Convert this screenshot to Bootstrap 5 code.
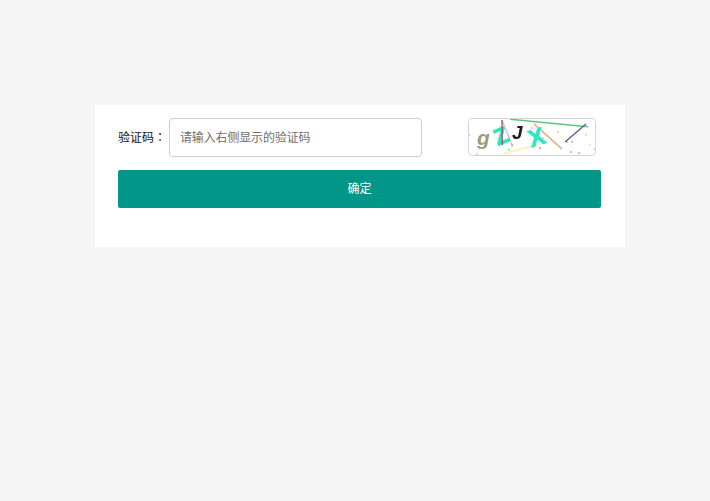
<!DOCTYPE html>
<html lang="zh">
<head>
<meta charset="utf-8">
<title>验证码</title>
<link href="https://cdn.jsdelivr.net/npm/bootstrap@5.3.0/dist/css/bootstrap.min.css" rel="stylesheet">
<style>
html,body{height:100%}
body{background:#f5f5f5;font-family:"Liberation Sans","Noto Sans CJK SC",sans-serif;font-size:12px;color:#222}
.verify-panel{width:530px;height:142px;margin:105px 0 0 95px;background:#fff;padding:13px 24px 0 23px}
.verify-label{width:51px;font-family:"Noto Sans CJK SC",sans-serif;font-size:12px;line-height:1;white-space:nowrap;color:#111;padding-bottom:1px}
.label-colon{font-family:"Noto Sans CJK TC",sans-serif}
.verify-input{width:253px;height:39px;font-size:12px;letter-spacing:-.15px;padding:0 10px;border:1px solid #ccc;border-radius:4px;color:#333;box-shadow:none}
.verify-input::placeholder{color:#6f6f6f;opacity:1}
.captcha-box{width:128px;height:38px;margin-left:46px;border:1px solid #d4d4d4;border-radius:4px;overflow:hidden;display:block;background:#fff}
.verify-submit{height:38px;background:#009688;border:0;border-radius:2px;font-size:12px;color:#fff;margin-top:13px}
.verify-submit:hover{background:#009688;color:#fff}
</style>
</head>
<body>
<form class="verify-panel">
  <div class="d-flex align-items-start">
    <label for="code" class="verify-label align-self-center">验证码<span class="label-colon" lang="zh-TW">：</span></label>
    <input id="code" type="text" class="form-control verify-input flex-shrink-0" placeholder="请输入右侧显示的验证码">
    <svg class="captcha-box flex-shrink-0" viewBox="1 1 126 36" role="img" aria-label="验证码图片">
      <defs><filter id="soft" x="-5%" y="-5%" width="110%" height="110%"><feGaussianBlur stdDeviation=".35"/></filter></defs>
      <g filter="url(#soft)">
      <g>
        <circle cx="1" cy="17" r=".9" fill="#b9b0c0"/><circle cx="41" cy="32" r="1" fill="#8fd8b0"/><circle cx="44" cy="27" r="1.1" fill="#d080a0"/>
        <circle cx="64" cy="10" r=".9" fill="#e0b0d0"/><circle cx="72" cy="30" r="1" fill="#b090d0"/><circle cx="90" cy="14" r="1" fill="#e8d090"/>
        <circle cx="99" cy="24" r="1" fill="#d8b090"/><circle cx="103" cy="34" r="1" fill="#b0a0d0"/><circle cx="104" cy="24" r=".9" fill="#e0a080"/>
        <circle cx="111" cy="35" r="1" fill="#e090b0"/><circle cx="118" cy="17" r=".9" fill="#a0e0d0"/><circle cx="122" cy="27" r=".9" fill="#e8e0a0"/>
        <circle cx="126" cy="31" r=".9" fill="#e8d090"/><circle cx="9" cy="36" r=".9" fill="#a0e0d0"/><circle cx="75" cy="20" r=".9" fill="#e8c0d0"/>
      </g>
      <path d="M35 36 79 24" stroke="#f6f0b8" stroke-width="1.6" fill="none"/>
      <path d="M42 1.3 120 8.7" stroke="#5cc87a" stroke-width="1.5" fill="none"/>
      <path d="M97 24 118 6" stroke="#5c5f8e" stroke-width="1.4" fill="none"/>
      <path d="M66 6 94 31" stroke="#e4b98c" stroke-width="1.7" fill="none"/>
      <path d="M34 2 44 27" stroke="#e8b4cf" stroke-width="1.3" fill="none"/>
      <text x="9" y="27" font-family="Liberation Sans" font-size="21" font-style="italic" font-weight="700" fill="#a09a78">g</text>
      <text x="26" y="25" font-family="Liberation Sans" font-size="23" font-weight="700" fill="#2fe6b4" stroke="#2fe6b4" stroke-width=".7" transform="rotate(-24 35 17)">Z</text>
      <text x="44" y="21" font-family="Liberation Sans" font-size="19" font-style="italic" font-weight="700" fill="#1c1c1c">J</text>
      <text x="61" y="27" font-family="Liberation Sans" font-size="24" font-weight="700" fill="#2fe6c4" stroke="#2fe6c4" stroke-width=".7" transform="rotate(-18 70 20)">X</text>
      <path d="M34 2 34.3 27" stroke="#8c5f86" stroke-width="1.4" fill="none"/>
      </g>
    </svg>
  </div>
  <button type="button" class="btn verify-submit w-100 d-flex align-items-center justify-content-center">确定</button>
</form>
<script src="https://cdn.jsdelivr.net/npm/bootstrap@5.3.0/dist/js/bootstrap.bundle.min.js"></script>
</body>
</html>
